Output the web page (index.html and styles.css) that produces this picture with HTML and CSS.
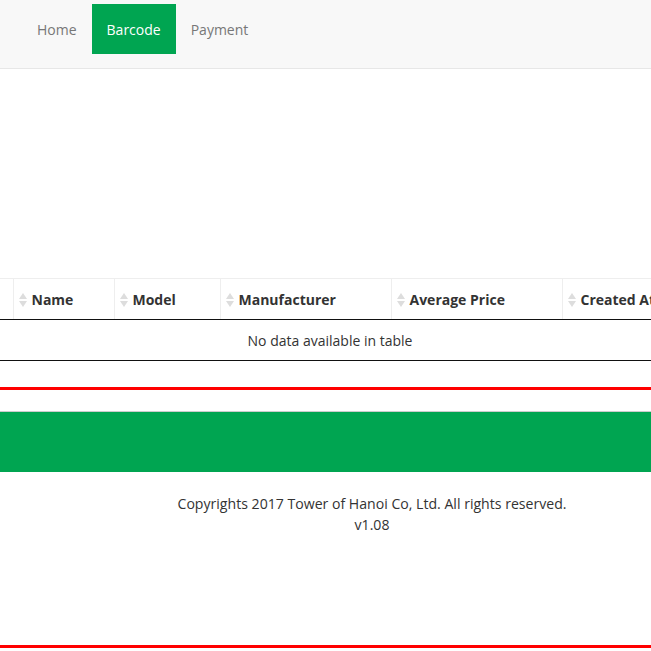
FILE: index.html
```html
<!DOCTYPE html>
<html>
<head>
<meta charset="utf-8">
<link rel="stylesheet" href="styles.css">
</head>
<body>
<header class="navbar">
  <nav class="nav">
    <a class="nav-link" href="#">Home</a>
    <a class="nav-link active" href="#">Barcode</a>
    <a class="nav-link" href="#">Payment</a>
  </nav>
</header>
<main class="content">
  <table class="data-table">
    <thead>
      <tr>
        <th class="col-blank"></th>
        <th class="col-name"><span class="sort"><i class="up"></i><i class="down"></i></span>Name</th>
        <th class="col-model"><span class="sort"><i class="up"></i><i class="down"></i></span>Model</th>
        <th class="col-manu"><span class="sort"><i class="up"></i><i class="down"></i></span>Manufacturer</th>
        <th class="col-price"><span class="sort"><i class="up"></i><i class="down"></i></span>Average Price</th>
        <th class="col-created"><span class="sort"><i class="up"></i><i class="down"></i></span>Created At</th>
      </tr>
    </thead>
    <tbody>
      <tr><td class="empty" colspan="6">No data available in table</td></tr>
    </tbody>
  </table>
  <div class="red-rule"></div>
</main>
<footer class="footer">
  <div class="footer-bar"></div>
  <div class="footer-text">
    <p>Copyrights 2017 Tower of Hanoi Co, Ltd. All rights reserved.</p>
    <p>v1.08</p>
  </div>
  <div class="red-rule bottom"></div>
</footer>
</body>
</html>
```
FILE: styles.css
```css
html, body {
  margin: 0;
  padding: 0;
  overflow: hidden;
}
body {
  font-family: "Open Sans", "Noto Sans", Arial, sans-serif;
  font-size: 14px;
  color: #333;
  background: #fff;
  width: 651px;
}
.navbar {
  height: 68px;
  background: #f8f8f8;
  border-bottom: 1px solid #e7e7e7;
  box-sizing: content-box;
}
.nav {
  display: flex;
  padding: 4px 0 0 22px;
}
.nav-link {
  display: block;
  height: 49px;
  line-height: 50px;
  padding: 1px 15px 0;
  color: #777;
  text-decoration: none;
}
.nav-link.active {
  background: #00a551;
  color: #fff;
}
.content {
  padding-top: 209px;
}
.data-table {
  border-collapse: collapse;
  width: 660px;
  table-layout: fixed;
}
.data-table th {
  text-align: left;
  font-weight: 700;
  height: 41px;
  padding: 0 0 0 5px;
  border-top: 1px solid #eee;
  border-left: 1px solid #eee;
  border-bottom: 1px solid #111;
  white-space: nowrap;
  overflow: hidden;
  box-sizing: border-box;
}
.data-table th.col-blank { border-left: 0; width: 13px; padding: 0; }
.col-name { width: 101px; }
.col-model { width: 106px; }
.col-manu { width: 171px; }
.col-price { width: 171px; }
.col-created { width: 98px; }
.sort {
  display: inline-flex;
  flex-direction: column;
  gap: 2px;
  vertical-align: middle;
  margin-right: 5px;
  position: relative;
  top: -1px;
}
.sort i {
  display: block;
  width: 0;
  height: 0;
  border-left: 4px solid transparent;
  border-right: 4px solid transparent;
}
.sort .up { border-bottom: 6px solid #ddd; }
.sort .down { border-top: 6px solid #ddd; }
.empty {
  text-align: center;
  height: 40px;
  border-bottom: 1px solid #111;
  padding: 0;
}
.red-rule {
  height: 3px;
  background: #ff0000;
  margin-top: 26px;
}
.footer-bar {
  margin-top: 21px;
  height: 60px;
  background: #00a551;
  border-top: 1px solid #ccc;
}
.footer-text {
  text-align: center;
  padding: 21px 0 0 93px;
  line-height: 21px;
  font-size: 14.1px;
}
.footer-text p { margin: 0; }
.red-rule.bottom {
  margin-top: 110px;
}
```
